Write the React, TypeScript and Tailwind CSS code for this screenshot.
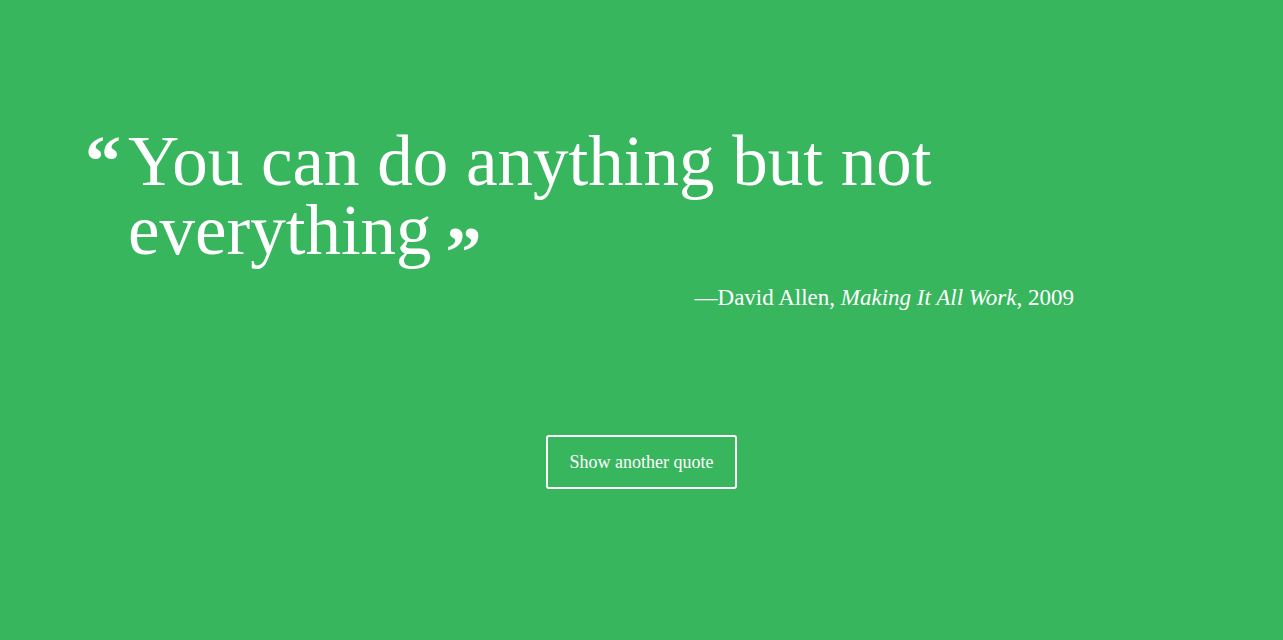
import React from "react";

export default function App() {
  return (
    <div
      className="min-h-screen w-full bg-[#38b65e] text-white"
      style={{ fontFamily: '"Liberation Serif", "Times New Roman", serif' }}
    >
      <div className="h-[640px] flex flex-col">
        <div className="pt-[127px] pl-[85px] w-[1074px]">
          <div className="flex">
            <span className="w-[43px] shrink-0 text-[72px] leading-[69px] font-bold">“</span>
            <p className="text-[71px] leading-[69px] font-normal">
              You can do anything but not
              <br />
              everything{" "}
              <span className="relative top-[22px] left-[-4px] font-bold text-[72px]">”</span>
            </p>
          </div>
          <div className="mt-[19px] text-right text-[23px] leading-[28px]">
            —David Allen, <em className="italic">Making It All Work</em>, 2009
          </div>
        </div>
        <div className="mt-[123px] flex justify-center">
          <button className="w-[191px] h-[54px] border-2 border-white rounded-[3px] text-[18px] text-white">
            Show another quote
          </button>
        </div>
      </div>
    </div>
  );
}
